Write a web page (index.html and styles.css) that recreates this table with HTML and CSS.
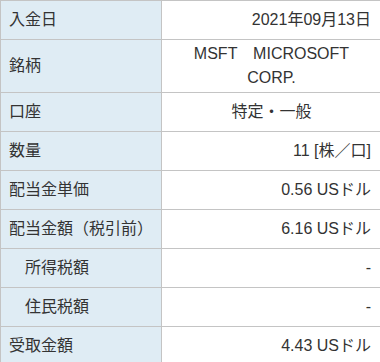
FILE: index.html
```html
<!DOCTYPE html>
<html lang="ja">
<head>
<meta charset="utf-8">
<title>配当金明細</title>
<link rel="stylesheet" href="styles.css">
</head>
<body>
<div class="detail">
  <div class="row"><div class="label">入金日</div><div class="value num">2021年09月13日</div></div>
  <div class="row"><div class="label">銘柄</div><div class="value center">MSFT　MICROSOFT CORP.</div></div>
  <div class="row"><div class="label">口座</div><div class="value center">特定・一般</div></div>
  <div class="row"><div class="label">数量</div><div class="value num">11 [株／口]</div></div>
  <div class="row"><div class="label">配当金単価</div><div class="value num">0.56 USドル</div></div>
  <div class="row"><div class="label">配当金額（税引前）</div><div class="value num">6.16 USドル</div></div>
  <div class="row"><div class="label sub">所得税額</div><div class="value num">-</div></div>
  <div class="row"><div class="label sub">住民税額</div><div class="value num">-</div></div>
  <div class="row"><div class="label">受取金額</div><div class="value num">4.43 USドル</div></div>
</div>
</body>
</html>
```
FILE: styles.css
```css
html, body {
  margin: 0;
  padding: 0;
  background: #ffffff;
  overflow: hidden;
}
.detail {
  border-top: 1px solid #c4c4c4;
  border-left: 1px solid #c4c4c4;
  font-family: "Liberation Sans", "Noto Sans CJK JP", sans-serif;
  font-size: 16px;
  line-height: 24px;
  color: #333333;
}
.row {
  display: grid;
  grid-template-columns: 161px 1fr;
  border-bottom: 1px solid #c4c4c4;
}
.label,
.value {
  box-sizing: border-box;
  min-height: 38px;
  padding: 2px 9px 2px 8px;
  display: flex;
  align-items: center;
}
.label {
  background: #dfecf4;
  border-right: 1px solid #c4c4c4;
}
.label.sub {
  padding-left: 24px;
}
.value {
  padding-left: 10px;
}
.num {
  justify-content: flex-end;
  text-align: right;
}
.center {
  justify-content: center;
  text-align: center;
}
```
